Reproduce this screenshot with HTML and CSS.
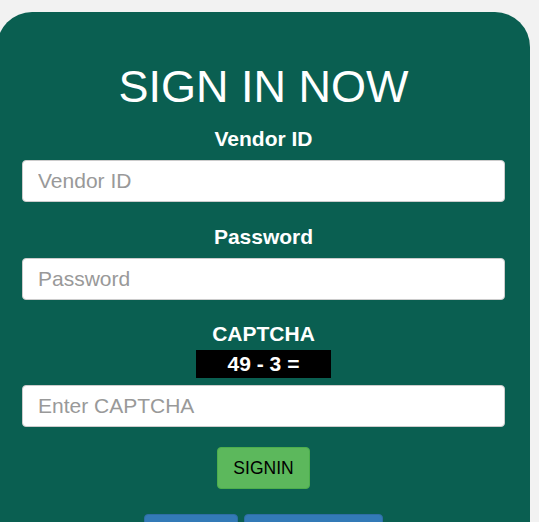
FILE: index.html
```html
<!DOCTYPE html>
<html lang="en">
<head>
<meta charset="utf-8">
<title>Sign In</title>
<link rel="stylesheet" href="styles.css">
</head>
<body>
<div class="card">
  <h1 class="title">SIGN IN NOW</h1>
  <form class="form">
    <label class="label" for="vid">Vendor ID</label>
    <input class="field" id="vid" type="text" placeholder="Vendor ID">
    <label class="label" for="pwd">Password</label>
    <input class="field" id="pwd" type="password" placeholder="Password">
    <label class="label label-captcha" for="cap">CAPTCHA</label>
    <div class="captcha">49 - 3 =</div>
    <input class="field field-captcha" id="cap" type="text" placeholder="Enter CAPTCHA">
    <button class="signin" type="button">SIGNIN</button>
    <div class="links">
      <button class="link link-a" type="button"></button>
      <button class="link link-b" type="button"></button>
    </div>
  </form>
</div>
</body>
</html>
```
FILE: styles.css
```css
html, body {
  margin: 0;
  padding: 0;
  background: #f2f2f2;
  font-family: "Liberation Sans", Arial, sans-serif;
  overflow: hidden;
}
.card {
  width: 533px;
  margin-top: 12px;
  margin-left: -3px;
  box-sizing: border-box;
  background: #0a5f51;
  border-radius: 35px 35px 0 0;
  padding: 50px 25px 40px 25px;
  height: 560px;
}
.title {
  margin: 0;
  font-weight: normal;
  font-size: 45px;
  line-height: 50px;
  color: #fff;
  text-align: center;
}
.form {
  display: flex;
  flex-direction: column;
  align-items: center;
  margin-top: 15px;
}
.label {
  font-weight: bold;
  font-size: 21px;
  line-height: 24px;
  color: #fff;
  margin-bottom: 9px;
}
.field {
  width: 100%;
  height: 42px;
  box-sizing: border-box;
  border: 1px solid #ccc;
  border-radius: 4px;
  padding: 0 15px;
  font-family: "Liberation Sans", Arial, sans-serif;
  font-size: 21px;
  color: #555;
  background: #fff;
  margin-bottom: 23px;
}
.field::placeholder {
  color: #999;
}
#pwd {
  margin-bottom: 22px;
}
.label-captcha {
  margin-bottom: 4px;
}
.captcha {
  width: 135px;
  height: 28px;
  line-height: 28px;
  background: #000;
  color: #fff;
  font-weight: bold;
  font-size: 21px;
  text-align: center;
  margin-bottom: 7px;
}
.field-captcha {
  margin-bottom: 20px;
}
.signin {
  height: 42px;
  padding: 0 15px;
  background: #5cb85c;
  border: 1px solid #4cae4c;
  border-radius: 4px;
  font-family: "Liberation Sans", Arial, sans-serif;
  font-size: 17.5px;
  color: #000;
}
.links {
  display: flex;
  gap: 6px;
  margin-top: 25px;
}
.link {
  height: 42px;
  background: #337ab7;
  border: 1px solid #2e6da4;
  border-radius: 4px;
}
.link-a { width: 94px; }
.link-b { width: 139px; }
```
